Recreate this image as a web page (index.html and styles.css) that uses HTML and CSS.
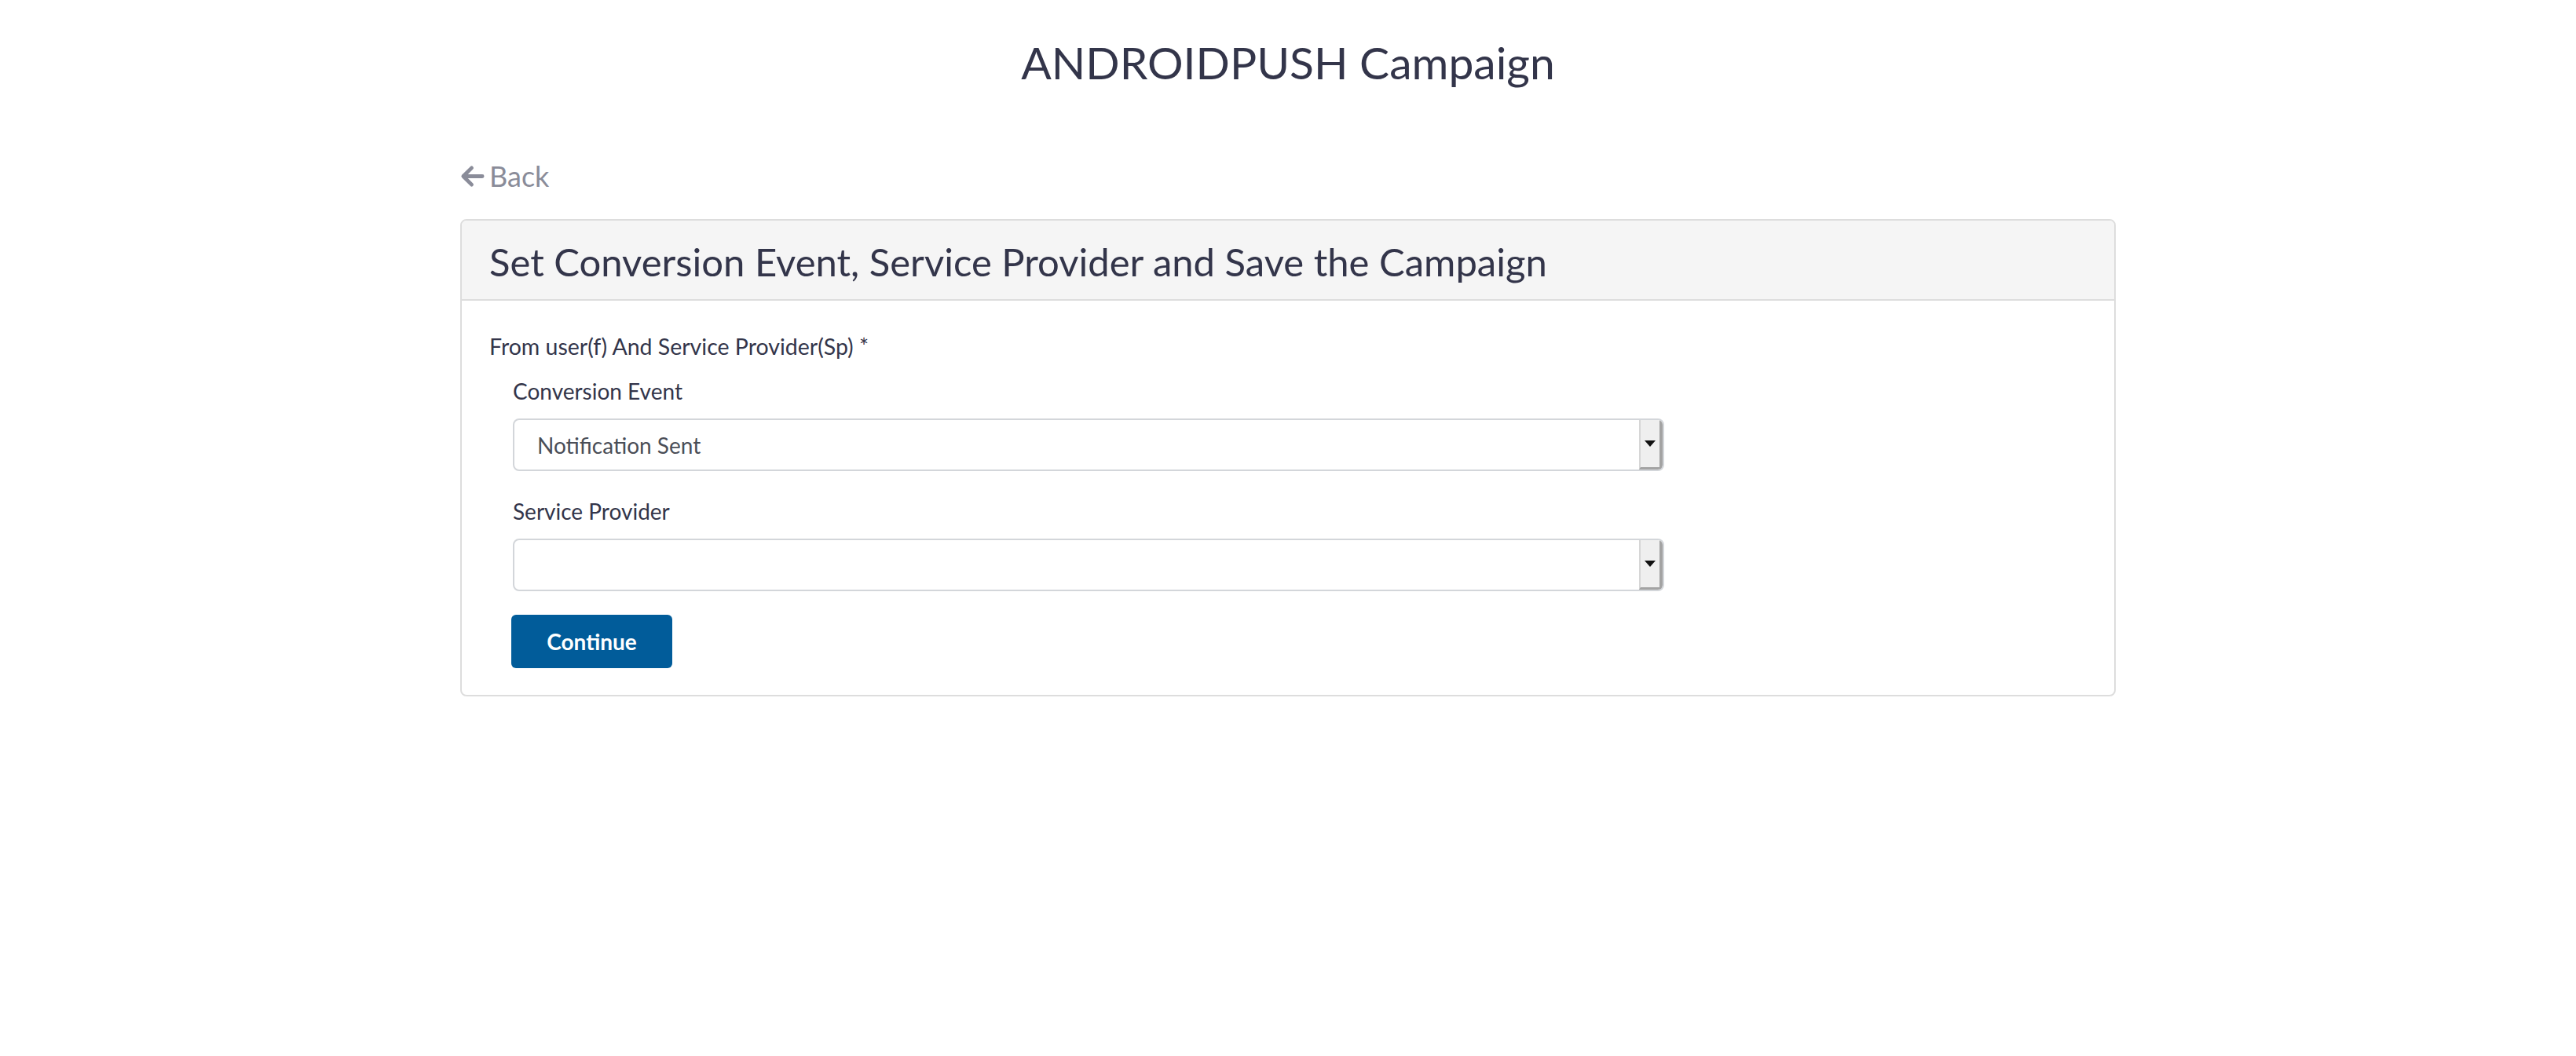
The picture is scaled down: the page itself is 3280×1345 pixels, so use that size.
FILE: index.html
```html
<!DOCTYPE html>
<html lang="en">
<head>
<meta charset="utf-8">
<title>ANDROIDPUSH Campaign</title>
<link rel="stylesheet" href="styles.css">
</head>
<body>
<div class="page">
  <h1 class="page-title">ANDROIDPUSH Campaign</h1>
  <div class="container">
    <a class="back" href="#">
      <svg class="back-icon" viewBox="0 0 32 32" width="32" height="32" aria-hidden="true">
        <path d="M15 5 L4 16 L15 27 M4 16 L29 16" fill="none" stroke="currentColor" stroke-width="5" stroke-linecap="round" stroke-linejoin="round"/>
      </svg>
      <span>Back</span>
    </a>
    <div class="panel">
      <div class="panel-heading">Set Conversion Event, Service Provider and Save the Campaign</div>
      <div class="panel-body">
        <div class="section-label">From user(f) And Service Provider(Sp) *</div>
        <div class="group">
          <div class="field-label">Conversion Event</div>
          <div class="select">
            <span class="select-value">Notification Sent</span>
            <span class="select-arrow"><span class="tri"></span></span>
          </div>
          <div class="field-label second">Service Provider</div>
          <div class="select">
            <span class="select-value"></span>
            <span class="select-arrow"><span class="tri"></span></span>
          </div>
          <button class="btn" type="button">Continue</button>
        </div>
      </div>
    </div>
  </div>
</div>
</body>
</html>
```

FILE: styles.css
```css
html, body {
  margin: 0;
  padding: 0;
  background: #ffffff;
}
body {
  font-family: Lato, "Open Sans", "Liberation Sans", sans-serif;
  color: #33354a;
}
.page {
  display: flex;
  flex-direction: column;
  align-items: center;
}
.page-title {
  margin: 48px 0 0 0;
  font-size: 57px;
  line-height: 62px;
  font-weight: 400;
  color: #33354a;
  text-align: center;
}
.container {
  width: 2108px;
  display: flex;
  flex-direction: column;
}
.back {
  margin-top: 94px;
  height: 40px;
  display: flex;
  align-items: center;
  gap: 6px;
  color: #8a8c99;
  text-decoration: none;
  font-size: 36px;
  line-height: 40px;
  align-self: flex-start;
}
.back-icon {
  width: 31px;
  height: 31px;
}
.panel {
  margin-top: 35px;
  border: 2px solid #dddddd;
  border-radius: 8px;
  overflow: hidden;
}
.panel-heading {
  background: #f5f5f5;
  border-bottom: 2px solid #dddddd;
  padding: 22px 35px 18px 35px;
  font-size: 49px;
  line-height: 60px;
  color: #33354a;
}
.panel-body {
  padding: 38px 35px 34px 35px;
}
.section-label {
  font-size: 28.5px;
  line-height: 40px;
  color: #33354a;
}
.group {
  margin-left: 30px;
  display: flex;
  flex-direction: column;
  align-items: flex-start;
}
.field-label {
  margin-top: 17px;
  font-size: 28px;
  line-height: 40px;
  color: #33354a;
}
.field-label.second {
  margin-top: 31px;
}
.select {
  margin-top: 15px;
  box-sizing: border-box;
  width: 1466px;
  height: 67px;
  border: 2px solid #d3d6da;
  border-radius: 8px;
  display: flex;
  align-items: stretch;
  overflow: hidden;
}
.select-value {
  flex: 1;
  padding-left: 29px;
  display: flex;
  align-items: center;
  font-size: 28px;
  color: #4a4e57;
}
.select-arrow {
  box-sizing: border-box;
  width: 30px;
  background: #efefef;
  border-left: 2px solid #d6d6d6;
  border-right: 4px solid #a3a3a3;
  border-bottom: 3px solid #a3a3a3;
  display: flex;
  align-items: center;
  justify-content: center;
}
.tri {
  width: 0;
  height: 0;
  border-left: 7px solid transparent;
  border-right: 7px solid transparent;
  border-top: 8px solid #111111;
}
.btn {
  margin-top: 30px;
  margin-left: -2px;
  width: 205px;
  height: 68px;
  border: none;
  border-radius: 6px;
  background: #015c9a;
  color: #ffffff;
  font-family: Lato, "Open Sans", "Liberation Sans", sans-serif;
  font-size: 28px;
  font-weight: 700;
  padding: 0;
  cursor: pointer;
}
```
